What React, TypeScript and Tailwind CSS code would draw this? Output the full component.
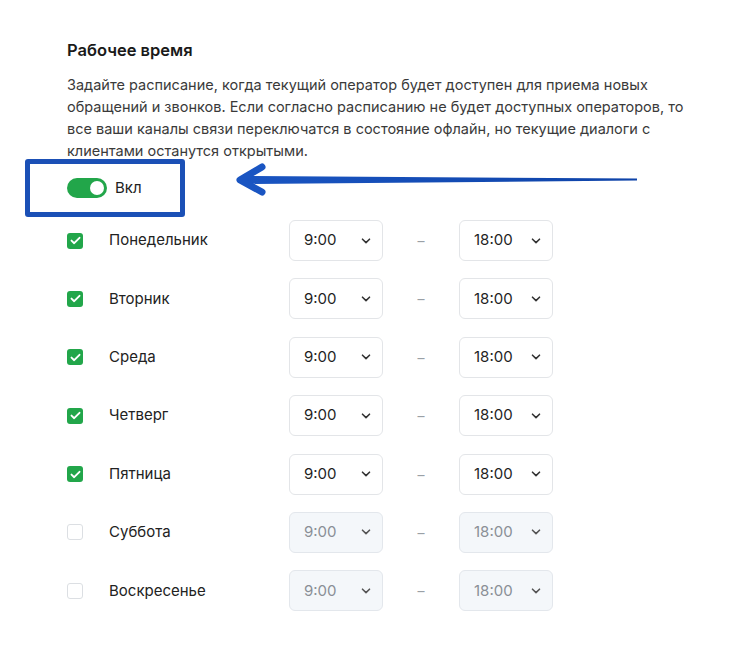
import React from "react";

const days = [
  { name: "Понедельник", on: true },
  { name: "Вторник", on: true },
  { name: "Среда", on: true },
  { name: "Четверг", on: true },
  { name: "Пятница", on: true },
  { name: "Суббота", on: false },
  { name: "Воскресенье", on: false },
];

function Chevron({ dim }: { dim?: boolean }) {
  return (
    <svg width="10" height="6" viewBox="0 0 10 6" className="shrink-0">
      <path d="M1.5 1.2 L5 4.6 L8.5 1.2" fill="none" stroke={dim ? "#555" : "#333"} strokeWidth="1.6" strokeLinecap="round" strokeLinejoin="round" />
    </svg>
  );
}

function Select({ value, disabled }: { value: string; disabled?: boolean }) {
  return (
    <div
      className={
        disabled
          ? "w-[94px] h-[41px] rounded-[6px] border border-[#e3e7ec] bg-[#f4f7fa] flex items-center justify-between pl-[14px] pr-[11px] text-[15px] text-[#8a8f96]"
          : "w-[94px] h-[41px] rounded-[6px] border border-[#e3e5e8] bg-white flex items-center justify-between pl-[14px] pr-[11px] text-[15px] text-[#1f1f1f]"
      }
    >
      <span>{value}</span>
      <Chevron dim={disabled} />
    </div>
  );
}

function Check({ on }: { on: boolean }) {
  if (!on) {
    return <div className="w-[16px] h-[16px] rounded-[3px] border border-[#dcdfe3] bg-white shrink-0" />;
  }
  return (
    <div className="w-[16px] h-[16px] rounded-[3px] bg-[#22a64a] flex items-center justify-center shrink-0">
      <svg width="11" height="9" viewBox="0 0 11 9">
        <path d="M1.5 4.6 L4.2 7.2 L9.5 1.8" fill="none" stroke="#fff" strokeWidth="1.9" strokeLinecap="round" strokeLinejoin="round" />
      </svg>
    </div>
  );
}

export default function App() {
  return (
    <div className="relative w-[747px] h-[657px] bg-white overflow-hidden pl-[67px] pt-[40px] font-['Inter',sans-serif] text-[#222]">
      <h2 className="h-[20px] leading-[20px] text-[16.5px] font-semibold text-[#1a1a1a]">Рабочее время</h2>
      <p className="mt-[14px] text-[14.5px] leading-[22px] text-[#3a3a3a] whitespace-nowrap">
        Задайте расписание, когда текущий оператор будет доступен для приема новых
        <br />
        обращений и звонков. Если согласно расписанию не будет доступных операторов, то
        <br />
        все ваши каналы связи переключатся в состояние офлайн, но текущие диалоги с
        <br />
        клиентами останутся открытыми.
      </p>

      <div className="mt-[16px] h-[20px] flex items-center gap-[8px]">
        <div className="w-[40px] h-[20px] rounded-full bg-[#22a64a] relative">
          <div className="absolute right-[3px] top-[3px] w-[14px] h-[14px] rounded-full bg-white" />
        </div>
        <span className="text-[15px] text-[#222]">Вкл</span>
      </div>

      <div className="mt-[22px] flex flex-col gap-[17.4px]">
        {days.map((d) => (
          <div key={d.name} className="flex items-center h-[41px]">
            <div className="w-[42px] flex items-center">
              <Check on={d.on} />
            </div>
            <div className="w-[180px] text-[15px] text-[#222]">{d.name}</div>
            <Select value="9:00" disabled={!d.on} />
            <div className="w-[76px] flex justify-center text-[14px] text-[#9aa0a6]">–</div>
            <Select value="18:00" disabled={!d.on} />
          </div>
        ))}
      </div>

      {/* annotation box */}
      <div className="absolute left-[25px] top-[159px] w-[160px] h-[58px] border-[5px] border-[#1b50b6] rounded-[3px]" />

      {/* annotation arrow */}
      <svg className="absolute left-0 top-0" width="747" height="657" viewBox="0 0 747 657">
        <defs>
          <linearGradient id="ag" x1="0" y1="0" x2="1" y2="0">
            <stop offset="0" stopColor="#1a55c2" />
            <stop offset="1" stopColor="#0e43a8" />
          </linearGradient>
        </defs>
        <polygon points="240,176 637,178.6 637,180.6 240,184" fill="url(#ag)" />
        <polyline points="262,167 240,180 262,192" fill="none" stroke="#1a55c2" strokeWidth="7" strokeLinecap="round" strokeLinejoin="round" />
      </svg>
    </div>
  );
}
